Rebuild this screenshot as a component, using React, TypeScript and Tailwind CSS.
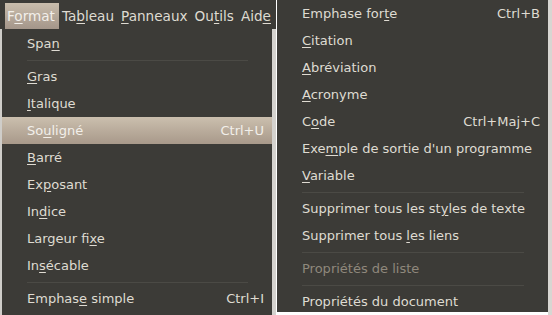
import React from "react";

type Item =
  | { kind: "item"; label: string; u?: number; shortcut?: string; active?: boolean; disabled?: boolean }
  | { kind: "sep" };

const leftItems: Item[] = [
  { kind: "item", label: "Span", u: 3 },
  { kind: "sep" },
  { kind: "item", label: "Gras", u: 0 },
  { kind: "item", label: "Italique", u: 0 },
  { kind: "item", label: "Souligné", u: 2, shortcut: "Ctrl+U", active: true },
  { kind: "item", label: "Barré", u: 0 },
  { kind: "item", label: "Exposant", u: 2 },
  { kind: "item", label: "Indice", u: 2 },
  { kind: "item", label: "Largeur fixe", u: 10 },
  { kind: "item", label: "Insécable", u: 2 },
  { kind: "sep" },
  { kind: "item", label: "Emphase simple", u: 6, shortcut: "Ctrl+I" },
];

const rightItems: Item[] = [
  { kind: "item", label: "Emphase forte", u: 11, shortcut: "Ctrl+B" },
  { kind: "item", label: "Citation", u: 0 },
  { kind: "item", label: "Abréviation", u: 0 },
  { kind: "item", label: "Acronyme", u: 0 },
  { kind: "item", label: "Code", u: 1, shortcut: "Ctrl+Maj+C" },
  { kind: "item", label: "Exemple de sortie d'un programme", u: 3 },
  { kind: "item", label: "Variable", u: 0 },
  { kind: "sep" },
  { kind: "item", label: "Supprimer tous les styles de texte", u: 21 },
  { kind: "item", label: "Supprimer tous les liens", u: 15 },
  { kind: "sep" },
  { kind: "item", label: "Propriétés de liste", disabled: true },
  { kind: "sep" },
  { kind: "item", label: "Propriétés du document" },
];

const Label = ({ text, u }: { text: string; u?: number }) => {
  if (u === undefined) return <span>{text}</span>;
  return (
    <span>
      {text.slice(0, u)}
      <span className="underline underline-offset-2">{text[u]}</span>
      {text.slice(u + 1)}
    </span>
  );
};

const Menu = ({ items }: { items: Item[] }) => (
  <div className="flex flex-col">
    {items.map((it, i) =>
      it.kind === "sep" ? (
        <div key={i} className="h-[6px] flex items-center pl-[25px] pr-[24px]">
          <div className="h-px w-full bg-[#4b4a45]" />
        </div>
      ) : (
        <div
          key={i}
          className={
            "h-[27px] flex items-center justify-between pl-[25px] pr-[8px] " +
            (it.active
              ? "bg-gradient-to-b from-[#cbbfae] to-[#a8998a] text-[#f2efea]"
              : it.disabled
              ? "text-[#8f887c]"
              : "text-[#dfdbd2]")
          }
        >
          <Label text={it.label} u={it.u} />
          {it.shortcut && <span>{it.shortcut}</span>}
        </div>
      )
    )}
  </div>
);

const bar = [
  { label: "Format", u: 1, active: true },
  { label: "Tableau", u: 2 },
  { label: "Panneaux", u: 0 },
  { label: "Outils", u: 2 },
  { label: "Aide", u: 3 },
];

export default function App() {
  return (
    <div
      className="w-[552px] h-[315px] bg-[#d8d6d2] flex overflow-hidden text-[13px]"
      style={{ fontFamily: '"DejaVu Sans", sans-serif' }}
    >
      <div className="w-[276px] flex flex-col">
        <div className="h-[29px] bg-[#3c3b37] flex items-end gap-px pl-[5px] pt-[3px] text-[13.6px]">
          {bar.map((b) => (
            <div
              key={b.label}
              className={
                "h-[26px] flex items-center pl-[2px] pr-[4px] " +
                (b.active
                  ? "bg-gradient-to-b from-[#c9bdac] to-[#a4968a] text-[#f2efea]"
                  : "text-[#dfdbd2]")
              }
            >
              <Label text={b.label} u={b.u} />
            </div>
          ))}
        </div>
        <div className="flex-1 flex">
          <div className="w-[2px] bg-[#cfcdc9]" />
          <div className="w-[270px] bg-[#3c3b37] pt-px">
            <Menu items={leftItems} />
          </div>
          <div className="flex-1 bg-[#d4d2ce]" />
        </div>
      </div>
      <div className="w-px bg-white" />
      <div className="flex flex-col">
        <div className="w-[271px] h-[312px] bg-[#3c3b37]">
          <Menu items={rightItems} />
        </div>
        <div className="flex-1 bg-white" />
      </div>
      <div className="flex-1 bg-[#d8d6d2]" />
    </div>
  );
}
